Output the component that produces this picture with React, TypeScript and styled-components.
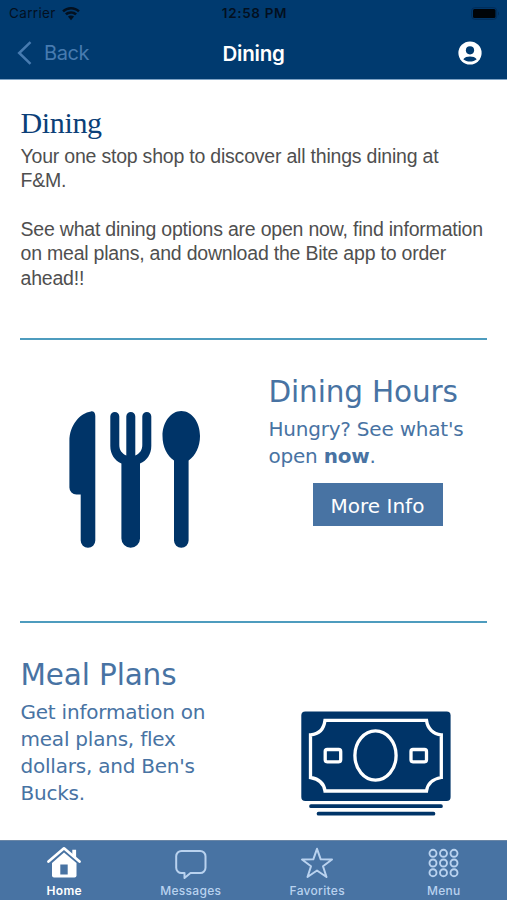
import React from "react";
import styled, { createGlobalStyle } from "styled-components";

const navy = "#003a6f";
const ink = "#003468";
const steel = "#4873a3";

const GlobalStyle = createGlobalStyle`
  * { box-sizing: border-box; }
  body { margin: 0; background: #fff; overflow: hidden; }
  h1, h2, p { margin: 0; font-weight: 400; }
`;

const Screen = styled.div`
  width: 507px;
  height: 900px;
  display: flex;
  flex-direction: column;
  overflow: hidden;
  background: #fff;
`;

const Header = styled.header`
  flex: none;
  height: 80px;
  background: ${navy};
  border-bottom: 1px solid #7fa3c5;
  font-family: Inter, "Liberation Sans", sans-serif;
`;

const StatusBar = styled.div`
  height: 27px;
  padding: 0 7px 0 9px;
  display: grid;
  grid-template-columns: 1fr auto 1fr;
  align-items: center;
  font-size: 13.5px;
  line-height: 27px;
  color: #03101f;
`;

const Carrier = styled.div`
  display: flex;
  align-items: center;
  gap: 6px;
  letter-spacing: 0.35px;
`;

const Clock = styled.div`
  font-weight: 600;
  letter-spacing: 0.65px;
`;

const BatterySlot = styled.div`
  display: flex;
  justify-content: flex-end;
`;

const NavBar = styled.div`
  height: 52px;
  padding: 0 25px 0 17px;
  display: grid;
  grid-template-columns: 1fr auto 1fr;
  align-items: center;
`;

const BackButton = styled.div`
  display: flex;
  align-items: center;
  gap: 12px;
  font-size: 20px;
  letter-spacing: -0.4px;
  line-height: 52px;
  color: #477bb0;
`;

const NavTitle = styled.div`
  font-size: 20.5px;
  font-weight: 600;
  letter-spacing: -0.2px;
  color: #fff;
  padding-left: 8px;
`;

const AccountSlot = styled.div`
  display: flex;
  justify-content: flex-end;
`;

const Content = styled.main`
  flex: 1;
  min-height: 0;
  overflow: hidden;
  padding: 0 20px;
`;

const Intro = styled.section`
  height: 258px;
  padding: 26px 0 0 0.5px;
`;

const IntroTitle = styled.h1`
  font: 400 30px/34px "Liberation Serif", serif;
  letter-spacing: -0.35px;
  color: #0b3f78;
`;

const IntroText = styled.p`
  margin-top: 3.5px;
  font: 400 19.5px/24.4px "Liberation Sans", sans-serif;
  letter-spacing: -0.21px;
  color: #4f4f4f;
  white-space: nowrap;
`;

const Feature = styled.section`
  height: 283.3px;
  border-top: 2px solid #4d9cbe;
  display: grid;
  grid-template-columns: 248px 1fr;
`;

const FeatureText = styled.div`
  padding: 33px 0 0 0.5px;
  font-family: "DejaVu Sans", sans-serif;
  color: ${steel};
  white-space: nowrap;
`;

const FeatureTitle = styled.h2`
  font-size: 29.5px;
  line-height: 38px;
  letter-spacing: -0.15px;
`;

const FeatureCopy = styled.p`
  margin-top: 5px;
  font-size: 20px;
  line-height: 26.8px;
  letter-spacing: -0.22px;
`;

const MoreInfo = styled.div`
  width: 130px;
  height: 43px;
  margin: 13px 0 0 44px;
  background: ${steel};
  color: #fff;
  font-size: 20px;
  line-height: 46px;
  text-align: center;
`;

const Art = styled.div<{ $top: number; $left: number }>`
  padding: ${(p) => p.$top}px 0 0 ${(p) => p.$left}px;
  svg { display: block; }
`;

const TabBar = styled.nav`
  flex: none;
  height: 60px;
  padding-left: 1px;
  display: grid;
  grid-template-columns: repeat(4, 1fr);
  background: ${steel};
  border-top: 1px solid #6a86a6;
`;

const Tab = styled.div<{ $active?: boolean }>`
  display: flex;
  flex-direction: column;
  align-items: center;
  padding-top: 5px;
  color: ${(p) => (p.$active ? "#fff" : "#b9d2ef")};
  font: ${(p) => (p.$active ? 600 : 500)} 12px/16px Inter, sans-serif;
  letter-spacing: 0.3px;
  svg { display: block; margin-bottom: 3px; }
`;

const WifiIcon = () => (
  <svg width="18" height="14" viewBox="0 0 18 14" fill="#03101f">
    <path d="M9 0C5.6 0 2.5 1.3.2 3.5l1.7 1.8A10.300 10.300 0 0 1 9 2.500c2.700 0 5.200 1 7.100 2.800l1.700-1.800A12.700 12.700 0 0 0 9 0Z" />
    <path d="M9 4.200c-2.300 0-4.400.9-6 2.300l1.800 1.800A6.100 6.100 0 0 1 9 6.700c1.600 0 3.100.6 4.200 1.600L15 6.500a8.800 8.800 0 0 0-6-2.300Z" />
    <path d="M9 8.400c-1.200 0-2.300.5-3.100 1.200L9 13.200l3.100-3.600A4.600 4.600 0 0 0 9 8.400Z" />
  </svg>
);

const BatteryIcon = () => (
  <svg width="29" height="13" viewBox="0 0 29 13">
    <rect x=".7" y=".7" width="25" height="11.600" rx="3" fill="none" stroke="#002c58" />
    <rect x="2" y="2" width="22.500" height="9" rx="1.500" fill="#000408" />
    <path d="M27 4.500c1.300.5 1.300 3.500 0 4Z" fill="#002c58" />
  </svg>
);

const BackIcon = () => (
  <svg width="15" height="24" viewBox="0 0 15 24" fill="none" stroke="#477bb0" strokeWidth="2.500">
    <path d="M13.500 1.200 2.200 12l11.300 10.800" />
  </svg>
);

const AccountIcon = () => (
  <svg width="24" height="24" viewBox="0 0 24 24">
    <circle cx="12" cy="12" r="11.600" fill="#fff" />
    <circle cx="12" cy="9.300" r="4.100" fill={navy} />
    <path d="M5.300 18.300c1.400-2.300 4-2.900 6.700-2.900s5.300.6 6.700 2.900c-1.900 1.700-4.100 2.300-6.700 2.300s-4.800-.6-6.700-2.300Z" fill={navy} />
  </svg>
);

const CutleryArt = () => (
  <svg width="132" height="138" viewBox="0 0 132 138" fill={ink}>
    <path d="M22 .4C11 2 .4 14 .4 30v46.500a7 7 0 0 0 7 7h4.300V129.500a7.300 7.300 0 0 0 14.600 0V5c0-3-1.500-4.900-4.300-4.600Z" />
    <path d="M41.300 5.500a4.500 4.500 0 0 1 9 0V34c0 5 2.500 8.500 7 10.500V5.500a4.500 4.500 0 0 1 9 0v39c4.500-2 7-5.500 7-10.500V5.500a4.500 4.500 0 0 1 9 0V35c0 8-4.300 14.500-11.300 17.500v75a9.300 9.300 0 0 1-18.600 0v-75C45.600 49.500 41.300 43 41.300 35Z" />
    <path d="M112.300 0c10.400 0 18.700 11 18.700 25 0 10.500-4.600 20-11.400 24.500v80a7.300 7.300 0 0 1-14.600 0v-80C98 45 93.500 35.500 93.500 25c0-14 8.400-25 18.800-25Z" />
  </svg>
);

const BillArt = () => (
  <svg width="150" height="106" viewBox="0 0 150 106">
    <rect x=".3" y=".5" width="149.300" height="89.500" rx="4" fill={ink} />
    <g fill="none" stroke="#fff" strokeWidth="3.300">
      <path d="M24 9.300H125.500C126.500 17.500 132 23.200 140.300 23.800V66.500C132 68 126.500 72.500 125.500 80H24C23 72.500 18.500 68 9.500 66.500V23.800C18.500 23.200 23 17.500 24 9.300Z" />
      <ellipse cx="74.500" cy="44.500" rx="20.600" ry="24.600" />
      <rect x="24.200" y="38.500" width="15.500" height="12.300" rx="2" />
      <rect x="110" y="38.500" width="15.500" height="12.300" rx="2" />
    </g>
    <path d="M10 95.200H140M17.500 102.700H132.500" stroke={ink} strokeWidth="3.700" strokeLinecap="round" />
  </svg>
);

const HomeIcon = () => (
  <svg width="34" height="34" viewBox="0 0 34 34">
    <path d="M17 6.500 5 17v12.500a2 2 0 0 0 2 2h20.500a2 2 0 0 0 2-2V17Z" fill="#fff" />
    <path d="m1.200 15.300 15.800-13.500 15.800 13.500" fill="none" stroke={steel} strokeWidth="5" />
    <path d="m1.500 15.500 15.500-13.200 15.500 13.200" fill="none" stroke="#fff" strokeWidth="2.700" strokeLinecap="round" strokeLinejoin="round" />
    <path d="M25.300 3.800h3.800v9l-3.800-3.300Z" fill="#fff" />
    <path d="M13.300 18.500h7.400v10h-7.400z" fill={steel} />
  </svg>
);

const MessageIcon = () => (
  <svg width="34" height="34" viewBox="0 0 34 34" fill="none" stroke="currentColor" strokeWidth="2" strokeLinejoin="round">
    <path d="M7.500 5h18.700a5.300 5.300 0 0 1 5.300 5.300v11.500a5.300 5.300 0 0 1-5.300 5.300H16.500L10.500 32v-4.900h-3A5.300 5.300 0 0 1 2.200 21.800V10.300A5.300 5.300 0 0 1 7.500 5Z" />
  </svg>
);

const StarIcon = () => (
  <svg width="34" height="34" viewBox="0 0 34 34" fill="none" stroke="currentColor" strokeWidth="2" strokeLinejoin="round">
    <path d="m17 2.800 3.700 10.500 11.300.2-9 6.700 3.500 10.800-9.500-6.500L7.500 31 11 20.200 2 13.500l11.300-.2Z" />
  </svg>
);

const GridIcon = () => (
  <svg width="34" height="34" viewBox="0 0 34 34" fill="none" stroke="currentColor" strokeWidth="1.900">
    {[7.3, 17, 26.7].map((y) =>
      [6, 16.5, 27].map((x) => <circle key={`${x}-${y}`} cx={x} cy={y} r="3.500" />)
    )}
  </svg>
);

export default function App() {
  return (
    <Screen>
      <GlobalStyle />
      <Header>
        <StatusBar>
          <Carrier>Carrier <WifiIcon /></Carrier>
          <Clock>12:58 PM</Clock>
          <BatterySlot><BatteryIcon /></BatterySlot>
        </StatusBar>
        <NavBar>
          <BackButton><BackIcon />Back</BackButton>
          <NavTitle>Dining</NavTitle>
          <AccountSlot><AccountIcon /></AccountSlot>
        </NavBar>
      </Header>
      <Content>
        <Intro>
          <IntroTitle>Dining</IntroTitle>
          <IntroText>
            Your one stop shop to discover all things dining at<br />F&amp;M.<br /><br />
            See what dining options are open now, find information<br />
            on meal plans, and download the Bite app to order<br />ahead!!
          </IntroText>
        </Intro>
        <Feature>
          <Art $top={71} $left={49}><CutleryArt /></Art>
          <FeatureText>
            <FeatureTitle>Dining Hours</FeatureTitle>
            <FeatureCopy>Hungry? See what's<br />open <b>now</b>.</FeatureCopy>
            <MoreInfo>More Info</MoreInfo>
          </FeatureText>
        </Feature>
        <Feature>
          <FeatureText>
            <FeatureTitle>Meal Plans</FeatureTitle>
            <FeatureCopy>Get information on<br />meal plans, flex<br />dollars, and Ben's<br />Bucks.</FeatureCopy>
          </FeatureText>
          <Art $top={88} $left={33}><BillArt /></Art>
        </Feature>
      </Content>
      <TabBar>
        <Tab $active><HomeIcon />Home</Tab>
        <Tab><MessageIcon />Messages</Tab>
        <Tab><StarIcon />Favorites</Tab>
        <Tab><GridIcon />Menu</Tab>
      </TabBar>
    </Screen>
  );
}
